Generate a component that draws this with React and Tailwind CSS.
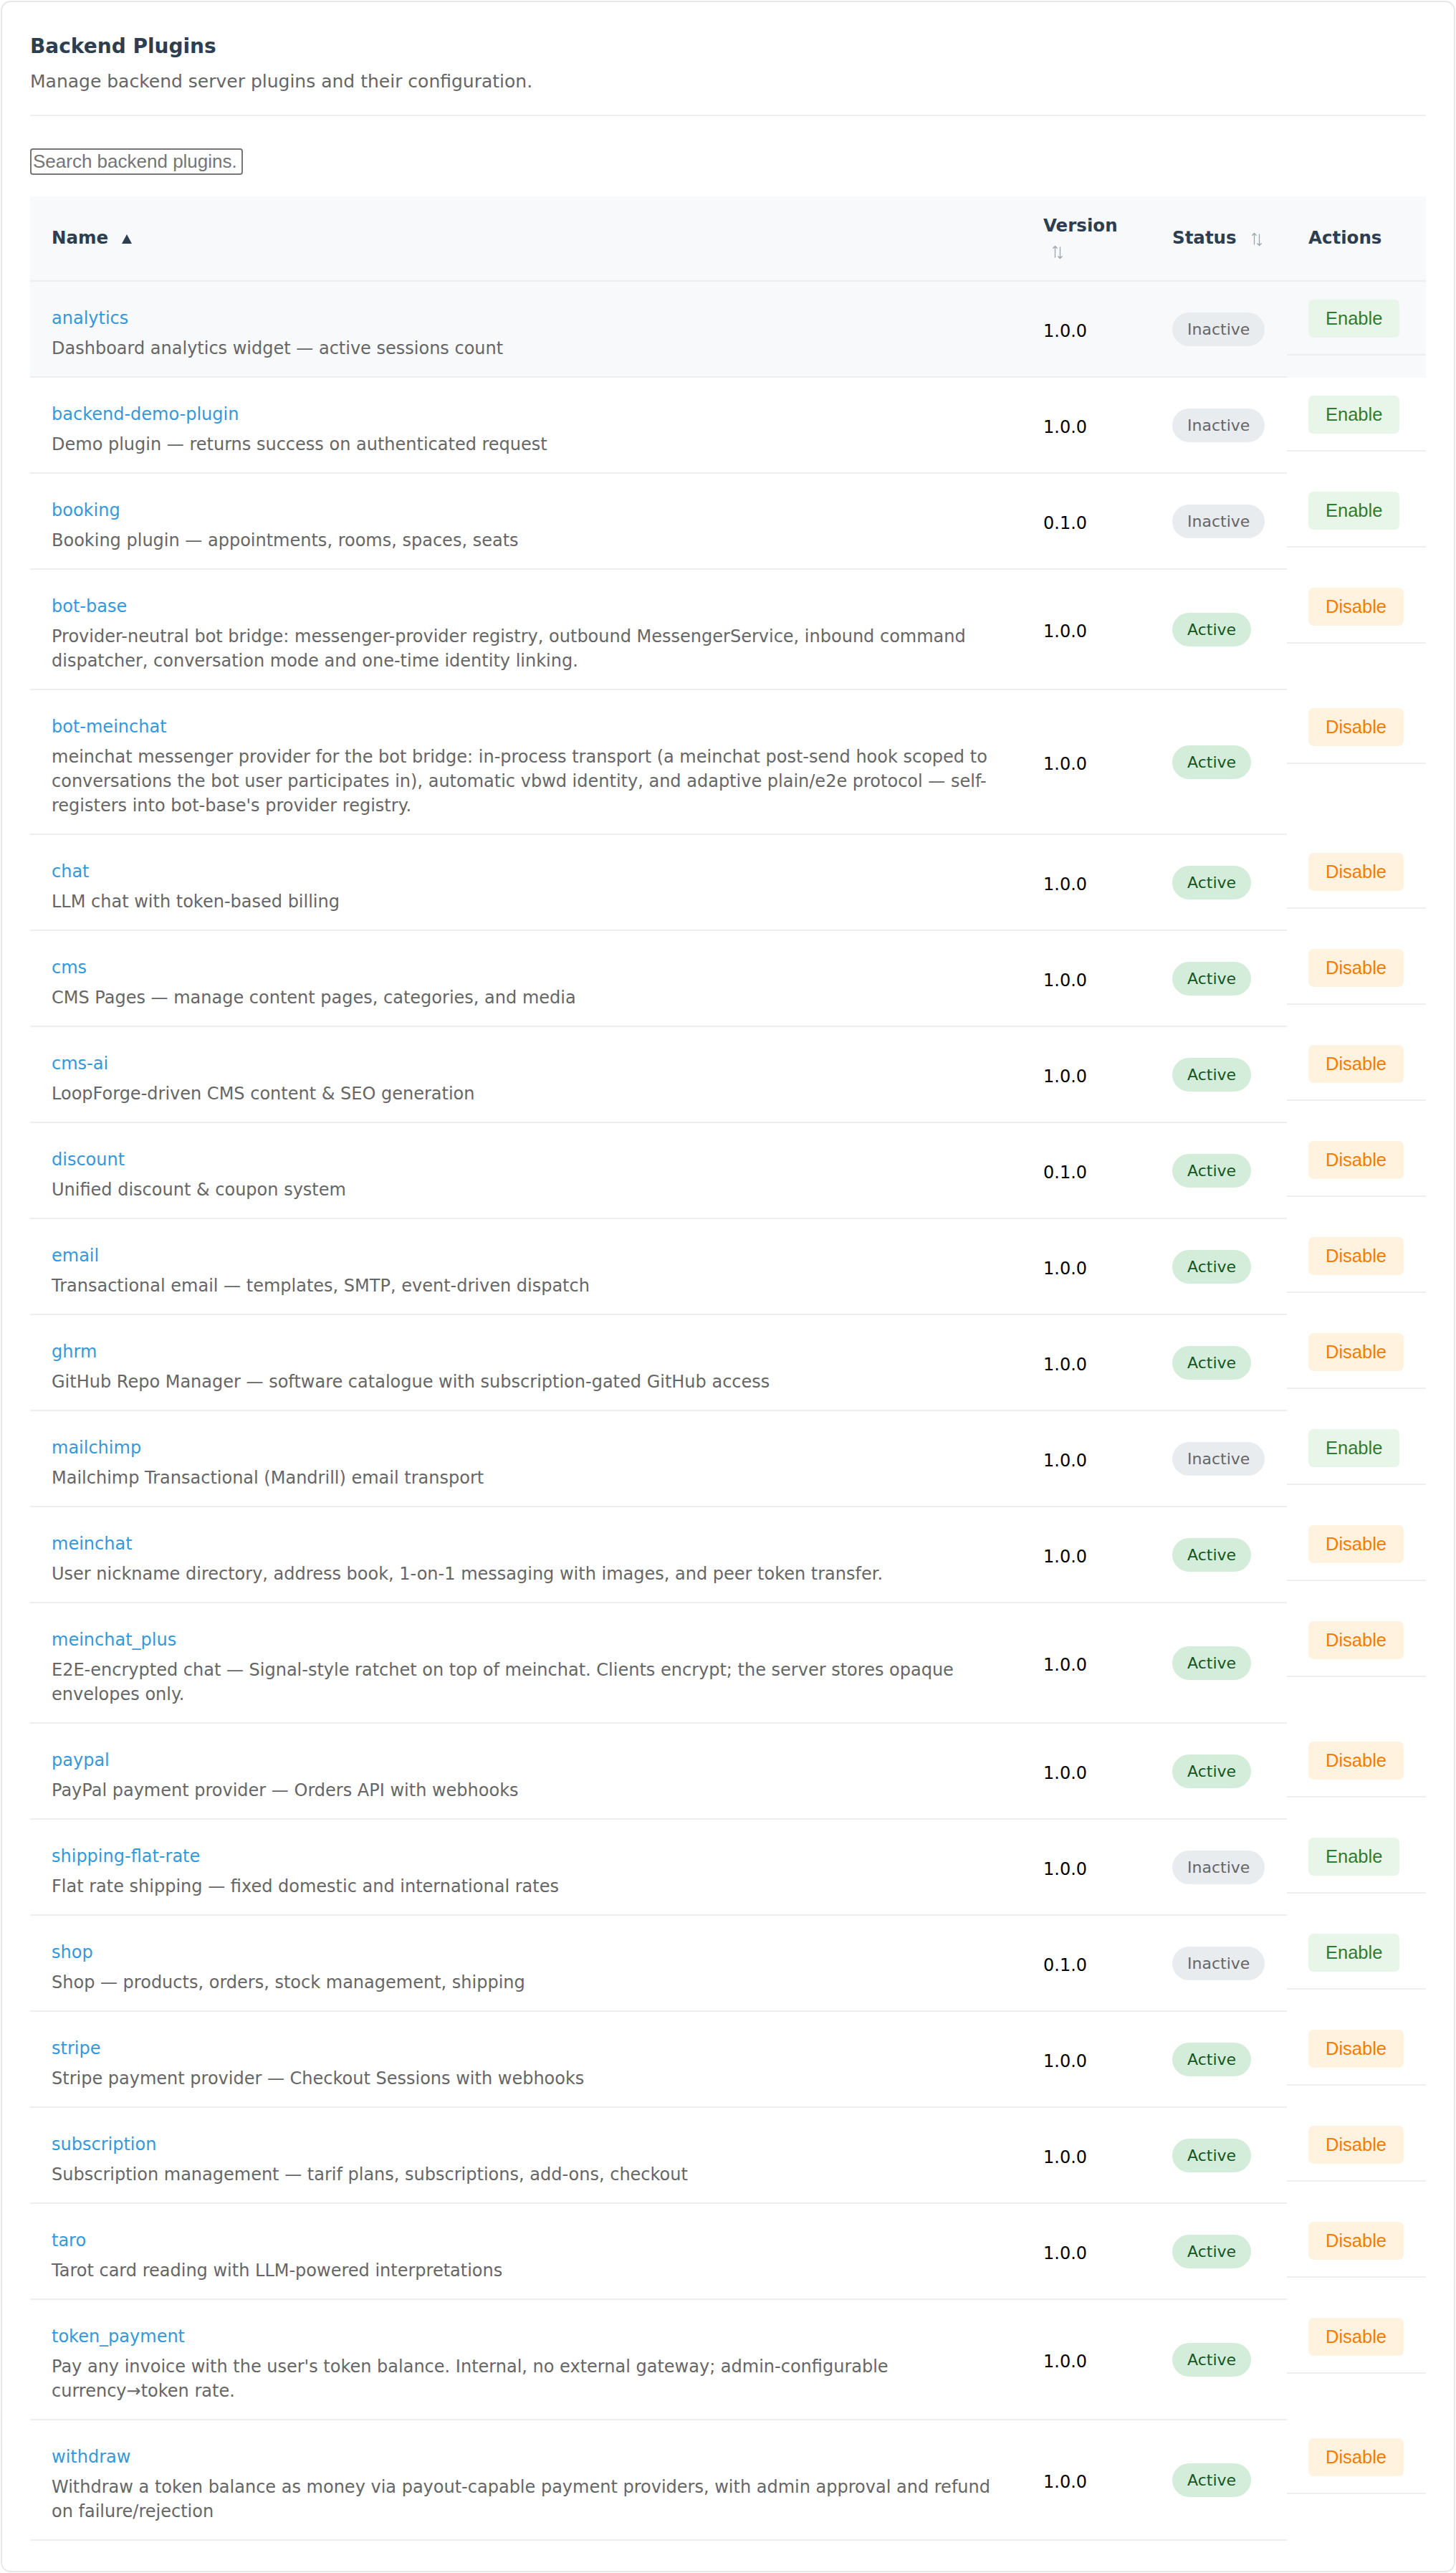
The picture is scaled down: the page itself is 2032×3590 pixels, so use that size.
import React from 'react';

const plugins = [
  { name: 'analytics', desc: 'Dashboard analytics widget — active sessions count', version: '1.0.0', active: false },
  { name: 'backend-demo-plugin', desc: 'Demo plugin — returns success on authenticated request', version: '1.0.0', active: false },
  { name: 'booking', desc: 'Booking plugin — appointments, rooms, spaces, seats', version: '0.1.0', active: false },
  { name: 'bot-base', desc: 'Provider-neutral bot bridge: messenger-provider registry, outbound MessengerService, inbound command dispatcher, conversation mode and one-time identity linking.', version: '1.0.0', active: true },
  { name: 'bot-meinchat', desc: "meinchat messenger provider for the bot bridge: in-process transport (a meinchat post-send hook scoped to conversations the bot user participates in), automatic vbwd identity, and adaptive plain/e2e protocol — self-registers into bot-base's provider registry.", version: '1.0.0', active: true },
  { name: 'chat', desc: 'LLM chat with token-based billing', version: '1.0.0', active: true },
  { name: 'cms', desc: 'CMS Pages — manage content pages, categories, and media', version: '1.0.0', active: true },
  { name: 'cms-ai', desc: 'LoopForge-driven CMS content & SEO generation', version: '1.0.0', active: true },
  { name: 'discount', desc: 'Unified discount & coupon system', version: '0.1.0', active: true },
  { name: 'email', desc: 'Transactional email — templates, SMTP, event-driven dispatch', version: '1.0.0', active: true },
  { name: 'ghrm', desc: 'GitHub Repo Manager — software catalogue with subscription-gated GitHub access', version: '1.0.0', active: true },
  { name: 'mailchimp', desc: 'Mailchimp Transactional (Mandrill) email transport', version: '1.0.0', active: false },
  { name: 'meinchat', desc: 'User nickname directory, address book, 1-on-1 messaging with images, and peer token transfer.', version: '1.0.0', active: true },
  { name: 'meinchat_plus', desc: 'E2E-encrypted chat — Signal-style ratchet on top of meinchat. Clients encrypt; the server stores opaque envelopes only.', version: '1.0.0', active: true },
  { name: 'paypal', desc: 'PayPal payment provider — Orders API with webhooks', version: '1.0.0', active: true },
  { name: 'shipping-flat-rate', desc: 'Flat rate shipping — fixed domestic and international rates', version: '1.0.0', active: false },
  { name: 'shop', desc: 'Shop — products, orders, stock management, shipping', version: '0.1.0', active: false },
  { name: 'stripe', desc: 'Stripe payment provider — Checkout Sessions with webhooks', version: '1.0.0', active: true },
  { name: 'subscription', desc: 'Subscription management — tarif plans, subscriptions, add-ons, checkout', version: '1.0.0', active: true },
  { name: 'taro', desc: 'Tarot card reading with LLM-powered interpretations', version: '1.0.0', active: true },
  { name: 'token_payment', desc: "Pay any invoice with the user's token balance. Internal, no external gateway; admin-configurable currency→token rate.", version: '1.0.0', active: true },
  { name: 'withdraw', desc: 'Withdraw a token balance as money via payout-capable payment providers, with admin approval and refund on failure/rejection', version: '1.0.0', active: true },
];

function SortIcon() {
  return (
    <svg width="14" height="20" viewBox="0 0 14 20" fill="none" stroke="#9aa4b1" strokeWidth="1.3" strokeLinecap="round" strokeLinejoin="round" className="ml-[13px] inline-block align-[-4px]">
      <path d="M3.5 17V1.5M0.8 4.3l2.7-2.8 2.7 2.8" />
      <path d="M10.5 3v15.5M7.8 15.7l2.7 2.8 2.7-2.8" />
    </svg>
  );
}

function SortAsc() {
  return (
    <svg width="14" height="13" viewBox="0 0 14 13" className="ml-[10px] inline-block align-[0px]">
      <polygon points="7,0 14,13 0,13" fill="#2c3e50" />
    </svg>
  );
}

function StatusBadge({ active }) {
  return active ? (
    <span className="inline-block rounded-full bg-[#d4edda] px-[21px] py-[8px] text-[22px] leading-[31px] text-[#155724]">Active</span>
  ) : (
    <span className="inline-block rounded-full bg-[#e9ecef] px-[21px] py-[8px] text-[22px] leading-[31px] text-[#666]">Inactive</span>
  );
}

export default function App() {
  return (
    <div className="bg-white font-['DejaVu_Sans',sans-serif] text-black">
      <div className="m-px rounded-[14px] border-2 border-[#e8e8e8] bg-white px-[39px] pt-[42px] pb-[42px]">
        <div className="border-b-2 border-[#eeeeee] pb-[28px]">
          <h1 className="text-[28px] font-bold leading-[40px] text-[#2c3e50]">Backend Plugins</h1>
          <p className="mt-[11px] text-[25px] leading-[36px] text-[#666]">Manage backend server plugins and their configuration.</p>
        </div>

        <input
          type="text"
          placeholder="Search backend plugins..."
          className="mt-[45px] block h-[37px] w-[297px] rounded-[4px] border-2 border-[#767676] pr-[4px] pl-[2px] font-['Liberation_Sans',Arial,sans-serif] text-[26px] placeholder:text-[#757575]"
        />

        <table className="mt-[30px] w-full table-fixed border-separate border-spacing-0">
          <colgroup>
            <col />
            <col className="w-[180px]" />
            <col className="w-[190px]" />
            <col className="w-[194px]" />
          </colgroup>
          <thead>
            <tr className="bg-[#f8f9fa] text-left text-[24.5px] font-bold leading-[34.5px] text-[#2c3e50]">
              <th className="border-b-2 border-[#eeeeee] px-[30px] py-[24px]">
                Name <SortAsc />
              </th>
              <th className="border-b-2 border-[#eeeeee] px-[30px] py-[24px]">
                Version <SortIcon />
              </th>
              <th className="whitespace-nowrap border-b-2 border-[#eeeeee] px-[30px] py-[24px]">
                Status <SortIcon />
              </th>
              <th className="border-b-2 border-[#eeeeee] px-[30px] py-[24px]">Actions</th>
            </tr>
          </thead>
          <tbody>
            {plugins.map((p, i) => (
              <tr key={p.name} className={i === 0 ? 'bg-[#f8f9fa]' : ''}>
                <td className="border-b-2 border-[#eeeeee] px-[30px] pt-[34px] pb-[22px]">
                  <a href="#" className="block text-[24px] leading-[34px] text-[#3498db]">{p.name}</a>
                  <div className="mt-[8px] text-[24px] leading-[34px] text-[#666]">{p.desc}</div>
                </td>
                <td className="border-b-2 border-[#eeeeee] px-[30px] pt-[5px] text-[24px] leading-[34px]">{p.version}</td>
                <td className="border-b-2 border-[#eeeeee] px-[30px]">
                  <StatusBadge active={p.active} />
                </td>
                <td className="p-0 align-top">
                  <div className="border-b-2 border-[#eeeeee] px-[30px] pt-[25px] pb-[23px]">
                    {p.active ? (
                      <button className="rounded-[7px] bg-[#fff3e0] px-[24px] py-[12px] font-['Liberation_Sans',Arial,sans-serif] text-[25.5px] leading-[29.3px] text-[#f57c00]">Disable</button>
                    ) : (
                      <button className="rounded-[7px] bg-[#e8f5e9] px-[24px] py-[12px] font-['Liberation_Sans',Arial,sans-serif] text-[25.5px] leading-[29.3px] text-[#2e7d32]">Enable</button>
                    )}
                  </div>
                </td>
              </tr>
            ))}
          </tbody>
        </table>
      </div>
    </div>
  );
}
